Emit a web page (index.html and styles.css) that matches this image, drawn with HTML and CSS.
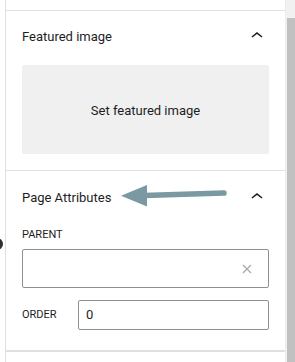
FILE: index.html
```html
<!DOCTYPE html>
<html lang="en">
<head>
  <meta charset="UTF-8" />
  <title>Document settings</title>
  <link rel="stylesheet" href="styles.css">
</head>
<body>
  <span class="edge-dot"></span>

  <div class="panel">
    <div class="panel-top"></div>

    <div class="section">
      <div class="section-head">
        <span class="section-title">Featured image</span>
        <svg class="chevron" viewBox="0 0 24 24" width="24" height="24"><path d="M6.5 12.4L12 8l5.5 4.4-.9 1.2L12 10l-4.6 3.6-1-1.2z"/></svg>
      </div>
      <div class="image-box">Set featured image</div>
    </div>

    <div class="section section-last">
      <div class="section-head head-attrs">
        <span class="section-title">Page Attributes</span>
        <svg class="chevron" viewBox="0 0 24 24" width="24" height="24"><path d="M6.5 12.4L12 8l5.5 4.4-.9 1.2L12 10l-4.6 3.6-1-1.2z"/></svg>
      </div>
      <div class="field-label">Parent</div>
      <div class="combo">
        <svg class="clear" viewBox="0 0 10 10" width="10" height="10"><path d="M1 1l8 8M9 1l-8 8"/></svg>
      </div>
      <div class="order-row">
        <span class="field-label">Order</span>
        <div class="order-input">0</div>
      </div>
    </div>
  </div>

  <div class="scrollbar"><div class="thumb"></div></div>

  <!-- annotation arrow -->
  <svg class="note-arrow" viewBox="0 0 114 26" width="114" height="26">
    <path d="M26 12.6L106 10" stroke="#7a99a3" stroke-width="5.5" stroke-linecap="round" fill="none"/>
    <polygon points="3,12.7 29,2 29,23.5" fill="#7a99a3"/>
  </svg>
</body>
</html>
```

FILE: styles.css
```css
body {
  margin: 0;
  height: 362px;
  display: flex;
  background: #fff;
  font-family: Roboto, "Noto Sans", sans-serif;
  color: #1e1e1e;
  overflow: hidden;
}
.edge-dot {
  position: absolute;
  left: -9px;
  top: 238px;
  width: 12px;
  height: 12px;
  border-radius: 50%;
  background: #2f2f2f;
}
.panel {
  flex: 1;
  margin-left: 5px;
  border-left: 1px solid #e0e0e0;
  border-right: 1px solid #ececec;
}
.panel-top {
  height: 10px;
  border-bottom: 1px solid #e0e0e0;
}
.section {
  padding: 0 16px 16px;
  border-bottom: 1px solid #e0e0e0;
}
.section-last {
  padding-bottom: 20px;
  border-bottom: 2px solid #e0e0e0;
}
.section-head {
  height: 50px;
  display: flex;
  align-items: center;
  justify-content: space-between;
}
.head-attrs {
  height: 51px;
  padding-top: 1px;
  box-sizing: border-box;
}
.section-title {
  font-size: 13px;
}
.chevron {
  fill: #1e1e1e;
}
.image-box {
  margin-top: 4px;
  height: 89px;
  background: #f0f0f0;
  border-radius: 2px;
  display: flex;
  align-items: center;
  justify-content: center;
  font-size: 13px;
  padding-top: 1px;
  box-sizing: border-box;
}
.field-label {
  font-size: 11px;
  text-transform: uppercase;
  line-height: 16px;
  margin-top: 5px;
}
.combo {
  margin-top: 6px;
  height: 37px;
  border: 1px solid #8c8f94;
  border-radius: 2px;
  display: flex;
  align-items: center;
  justify-content: flex-end;
  padding-right: 16px;
}
.clear {
  stroke: #a7aaad;
  stroke-width: 1.3;
}
.order-row {
  margin-top: 12px;
  display: flex;
  align-items: center;
}
.order-row .field-label {
  margin-top: 0;
  width: 56px;
}
.order-input {
  flex: 1;
  height: 28px;
  border: 1px solid #8c8f94;
  border-radius: 2px;
  font-size: 13px;
  line-height: 28px;
  padding-left: 7px;
}
.scrollbar {
  width: 8px;
  background: #f1f1f1;
  padding-left: 1px;
}
.thumb {
  margin-top: 18px;
  height: 344px;
  background: #c1c1c1;
}
.note-arrow {
  position: absolute;
  left: 118px;
  top: 183px;
}
```
